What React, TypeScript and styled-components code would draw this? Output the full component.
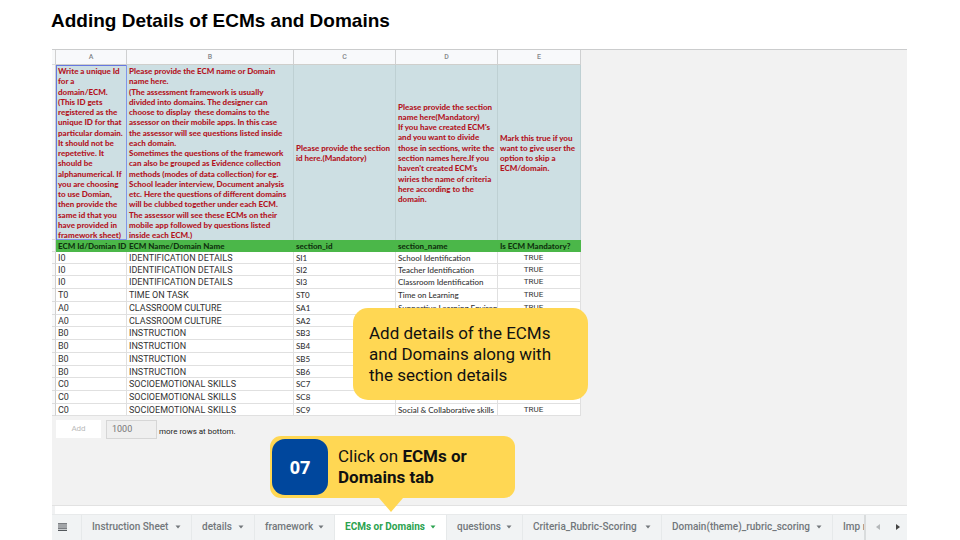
import React from "react";
import styled, { createGlobalStyle } from "styled-components";

const GlobalStyle = createGlobalStyle`
  * { box-sizing: border-box; }
  body { margin: 0; background: #fff; font-family: "Liberation Sans", Arial, sans-serif; }
  button, input { font: inherit; color: inherit; border: 0; padding: 0; background: none; }
`;

const Page = styled.main`
  min-height: 100vh;
  padding: 0 53px 0 52px;
  display: flex;
  flex-direction: column;
`;

const Title = styled.h1`
  margin: 0 0 0 -1px;
  height: 49px;
  padding-top: 9px;
  font-size: 19px;
  line-height: 23px;
  font-weight: 700;
  color: #000;
`;

const Workbook = styled.section`
  flex: 1;
  display: flex;
  flex-direction: column;
  position: relative;
  background: #f2f2f2;
  border-top: 1px solid #cbcccd;
`;

const SheetArea = styled.div`
  flex: 1;
  display: flex;
  flex-direction: column;
  align-items: flex-start;
  border-bottom: 1px solid #e2e2e2;
`;

const Grid = styled.table`
  table-layout: fixed;
  width: 529px;
  border-collapse: separate;
  border-spacing: 0;
  color: #333;
`;

const Column = styled.col<{ $width: number }>`
  width: ${(p) => p.$width}px;
`;

const Gutter = styled.td`
  padding: 0;
  background: #f8f9fa;
  border-right: 1px solid #d0d0d0;
  border-bottom: 1px solid #dcdcdc;
`;

const Letter = styled.th`
  height: 15px;
  padding: 0;
  background: #f8f9fb;
  border-right: 1px solid #cfd0d1;
  border-bottom: 1px solid #cfcfcc;
  font: 500 7px/14px Roboto, sans-serif;
  color: #85888b;
`;

const NoteCell = styled.td<{ $selected?: boolean }>`
  height: 175px;
  padding: 1px 0 0 2px;
  vertical-align: middle;
  background: #cddfe3;
  border-right: 1px solid ${(p) => (p.$selected ? "#8195e8" : "#bed0d3")};
  box-shadow: ${(p) => (p.$selected ? "inset 1px 1px #6678e0, inset 0 -1px #8195e8" : "none")};
`;

const Note = styled.div<{ $height: number }>`
  height: ${(p) => p.$height}px;
  display: flex;
  flex-direction: column;
  justify-content: space-between;
  font: 900 8px/10px Lato, sans-serif;
  color: #b3151f;
  white-space: pre;
`;

const FieldName = styled.th`
  height: 12px;
  padding: 0 0 0 2px;
  background: #4bb749;
  text-align: left;
  font: 900 8px/12px Lato, sans-serif;
  color: #10330f;
  white-space: nowrap;
`;

const DataRow = styled.tr<{ $height: number }>`
  height: ${(p) => p.$height}px;
`;

const Cell = styled.td<{ $kind: "name" | "section" | "flag" }>`
  padding: 0 ${(p) => (p.$kind === "flag" ? 13 : 0)}px 0 2px;
  background: #fff;
  border-right: 1px solid #e0e0e0;
  border-bottom: 1px solid #e0e0e0;
  overflow: hidden;
  white-space: nowrap;
  line-height: 10px;
  font-family: ${(p) => (p.$kind === "section" ? "Lato" : "Roboto")}, sans-serif;
  font-size: ${(p) => (p.$kind === "name" ? 9 : 8)}px;
  font-weight: ${(p) => (p.$kind === "section" ? 500 : 400)};
  text-align: ${(p) => (p.$kind === "flag" ? "center" : "left")};
`;

const AddRows = styled.form`
  display: flex;
  align-items: flex-start;
  margin: 4px 0 0 4px;
  font: 400 8px/18px Roboto, sans-serif;
`;

const AddButton = styled.button`
  width: 45px;
  height: 18px;
  background: #fff;
  color: #b9b9b9;
`;

const CountInput = styled.input`
  && {
    width: 51px;
    height: 19px;
    margin-left: 5px;
    padding: 0 5px 1px;
    border: 1px solid #d6d6d6;
    background: #efefef;
    color: #777;
    font-size: 9px;
  }
`;

const CountLabel = styled.label`
  margin: 3px 0 0 2px;
  color: #222;
`;

const ScrollTrack = styled.div`
  height: 8px;
  background: #fff;
  border-left: 3px solid #f0f1f2;
`;

const TabBar = styled.nav`
  height: 26px;
  display: flex;
  background: #f1f3f4;
  border-top: 1px solid #e8eaeb;
`;

const TabList = styled.div`
  flex: 1;
  min-width: 0;
  display: flex;
  overflow: hidden;
`;

const IconButton = styled.button`
  && {
    width: 20px;
    padding-bottom: 2px;
    display: flex;
    align-items: center;
    justify-content: center;
    flex: none;
  }
`;

const MenuSlot = styled.div`
  width: 29px;
  flex: none;
  display: flex;
`;

const Tab = styled.button<{ $width: number; $active?: boolean }>`
  && {
    flex: none;
    width: ${(p) => p.$width}px;
    padding: 0 10px 1px;
    display: flex;
    align-items: center;
    justify-content: space-between;
    border-left: 1px solid #e6e9ea;
    background: ${(p) => (p.$active ? "#fff" : "#f1f3f4")};
    color: ${(p) => (p.$active ? "#2ba24f" : "#72777b")};
    font: ${(p) => (p.$active ? 700 : 500)} 10px/12px Roboto, sans-serif;
    white-space: nowrap;
  }
`;

const TabArrows = styled.div`
  width: 43px;
  flex: none;
  display: flex;
  padding-left: 2px;
  border-left: 2px solid #d9dcdd;
`;

const DetailCallout = styled.aside`
  position: absolute;
  left: 301px;
  top: 258px;
  width: 235px;
  padding: 15px 16px 14px;
  border-radius: 15px;
  background: #ffd753;
  font: 400 17px/21px Roboto, sans-serif;
  color: #111;
`;

const StepCallout = styled.aside`
  position: absolute;
  left: 218px;
  bottom: 42px;
  width: 245px;
  height: 62px;
  padding-left: 2px;
  display: flex;
  align-items: center;
  gap: 10px;
  border-radius: 11px;
  background: #ffd753;
  font: 400 17px/21px Roboto, sans-serif;
  color: #111;
`;

const StepNumber = styled.span`
  width: 56px;
  height: 56px;
  flex: none;
  border-radius: 13px;
  background: #00479d;
  color: #fff;
  font: 700 18px/56px "Open Sans", sans-serif;
  text-align: center;
`;

const Pointer = styled.svg`
  position: absolute;
  left: 109px;
  top: 100%;
`;

const Caret = () => (
  <svg width="6" height="4" viewBox="0 0 6 4" aria-hidden="true">
    <path d="M0.5 0.5h5L3 3.5z" fill="currentColor" />
  </svg>
);

const notes = [
  {
    height: 174,
    lines: ["Write a unique Id", "for a", "domain/ECM.", "(This ID gets", "registered as the", "unique ID for that", "particular domain.", "It should not be", "repetetive. It", "should be", "alphanumerical. If", "you are choosing", "to use Domian,", "then provide the", "same id that you", "have provided in", "framework sheet)"],
  },
  {
    height: 174,
    lines: ["Please provide the ECM name or Domain", "name here.", "(The assessment framework is usually", "divided into domains. The designer can", "choose to display  these domains to the", "assessor on their mobile apps. In this case", "the assessor will see questions listed inside", "each domain.", "Sometimes the questions of the framework", "can also be grouped as Evidence collection", "methods (modes of data collection) for eg.", "School leader interview, Document analysis", "etc. Here the questions of different domains", "will be clubbed together under each ECM.", "The assessor will see these ECMs on their", "mobile app followed by questions listed", "inside each ECM.)"],
  },
  { height: 20, lines: ["Please provide the section", "id here.(Mandatory)"] },
  {
    height: 103,
    lines: ["Please provide the section", "name here(Mandatory)", "If you have created ECM's", "and you want to divide", "those in sections, write the", "section names here.If you", "haven't created ECM's", "wiries the name of criteria", "here according to the", "domain."],
  },
  { height: 41, lines: ["Mark this true if you", "want to give user the", "option to skip a", "ECM/domain."] },
];

const fields = ["ECM Id/Domian ID", "ECM Name/Domain Name", "section_id", "section_name", "Is ECM Mandatory?"];

type Row = [number, string, string, string, string, string];
const rows: Row[] = [
  [12, "I0", "IDENTIFICATION DETAILS", "SI1", "School Identification", "TRUE"],
  [12, "I0", "IDENTIFICATION DETAILS", "SI2", "Teacher Identification", "TRUE"],
  [13, "I0", "IDENTIFICATION DETAILS", "SI3", "Classroom Identification", "TRUE"],
  [13, "T0", "TIME ON TASK", "ST0", "Time on Learning", "TRUE"],
  [13, "A0", "CLASSROOM CULTURE", "SA1", "Supportive Learning Environment", "TRUE"],
  [12, "A0", "CLASSROOM CULTURE", "SA2", "", ""],
  [13, "B0", "INSTRUCTION", "SB3", "", ""],
  [13, "B0", "INSTRUCTION", "SB4", "", ""],
  [13, "B0", "INSTRUCTION", "SB5", "", ""],
  [12, "B0", "INSTRUCTION", "SB6", "", ""],
  [13, "C0", "SOCIOEMOTIONAL SKILLS", "SC7", "", ""],
  [13, "C0", "SOCIOEMOTIONAL SKILLS", "SC8", "Perseverance", "TRUE"],
  [12, "C0", "SOCIOEMOTIONAL SKILLS", "SC9", "Social & Collaborative skills", "TRUE"],
];

const tabs = [
  { name: "Instruction Sheet", width: 110 },
  { name: "details", width: 63 },
  { name: "framework", width: 80 },
  { name: "ECMs or Domains", width: 112, active: true },
  { name: "questions", width: 76 },
  { name: "Criteria_Rubric-Scoring", width: 139 },
  { name: "Domain(theme)_rubric_scoring", width: 171 },
  { name: "Imp notes", width: 80 },
];

export default function App() {
  return (
    <Page>
      <GlobalStyle />
      <Title>Adding Details of ECMs and Domains</Title>
      <Workbook>
        <SheetArea>
          <Grid>
            <colgroup>
              {[4, 71, 167, 102, 102, 83].map((w, i) => (
                <Column key={i} $width={w} />
              ))}
            </colgroup>
            <thead>
              <tr>
                <Gutter />
                {["A", "B", "C", "D", "E"].map((l) => (
                  <Letter key={l}>{l}</Letter>
                ))}
              </tr>
            </thead>
            <tbody>
              <tr>
                <Gutter />
                {notes.map((n, i) => (
                  <NoteCell key={i} $selected={i === 0}>
                    <Note $height={n.height}>
                      {n.lines.map((line) => (
                        <span key={line}>{line}</span>
                      ))}
                    </Note>
                  </NoteCell>
                ))}
              </tr>
              <tr>
                <Gutter />
                {fields.map((f) => (
                  <FieldName key={f} scope="col">{f}</FieldName>
                ))}
              </tr>
              {rows.map(([height, id, name, sectionId, section, flag]) => (
                <DataRow key={sectionId} $height={height}>
                  <Gutter />
                  <Cell $kind="name">{id}</Cell>
                  <Cell $kind="name">{name}</Cell>
                  <Cell $kind="section">{sectionId}</Cell>
                  <Cell $kind="section">{section}</Cell>
                  <Cell $kind="flag">{flag}</Cell>
                </DataRow>
              ))}
            </tbody>
          </Grid>
          <AddRows>
            <AddButton type="button">Add</AddButton>
            <CountInput id="row-count" defaultValue="1000" />
            <CountLabel htmlFor="row-count">more rows at bottom.</CountLabel>
          </AddRows>
        </SheetArea>
        <ScrollTrack />
        <TabBar>
          <MenuSlot>
            <IconButton aria-label="All sheets">
              <svg width="9" height="8" viewBox="0 0 9 8">
                <path d="M0 .8h9M0 3h9M0 5.2h9M0 7.4h9" stroke="#54585c" strokeWidth="1.2" />
              </svg>
            </IconButton>
          </MenuSlot>
          <TabList>
            {tabs.map((t) => (
              <Tab key={t.name} $width={t.width} $active={t.active}>
                {t.name}
                <Caret />
              </Tab>
            ))}
          </TabList>
          <TabArrows>
            <IconButton aria-label="Previous sheets">
              <svg width="4" height="6" viewBox="0 0 4 6">
                <path d="M4 0v6L0 3z" fill="#b5b8ba" />
              </svg>
            </IconButton>
            <IconButton aria-label="Next sheets">
              <svg width="4" height="6" viewBox="0 0 4 6">
                <path d="M0 0v6l4-3z" fill="#444" />
              </svg>
            </IconButton>
          </TabArrows>
        </TabBar>
        <DetailCallout>
          Add details of the ECMs
          <br />
          and Domains along with
          <br />
          the section details
        </DetailCallout>
        <StepCallout>
          <StepNumber>07</StepNumber>
          <span>
            Click on <b>ECMs or<br />Domains tab</b>
          </span>
          <Pointer width="24" height="14" viewBox="0 0 24 14" aria-hidden="true">
            <path d="M0 0h24L12 14z" fill="#ffd753" />
          </Pointer>
        </StepCallout>
      </Workbook>
    </Page>
  );
}
